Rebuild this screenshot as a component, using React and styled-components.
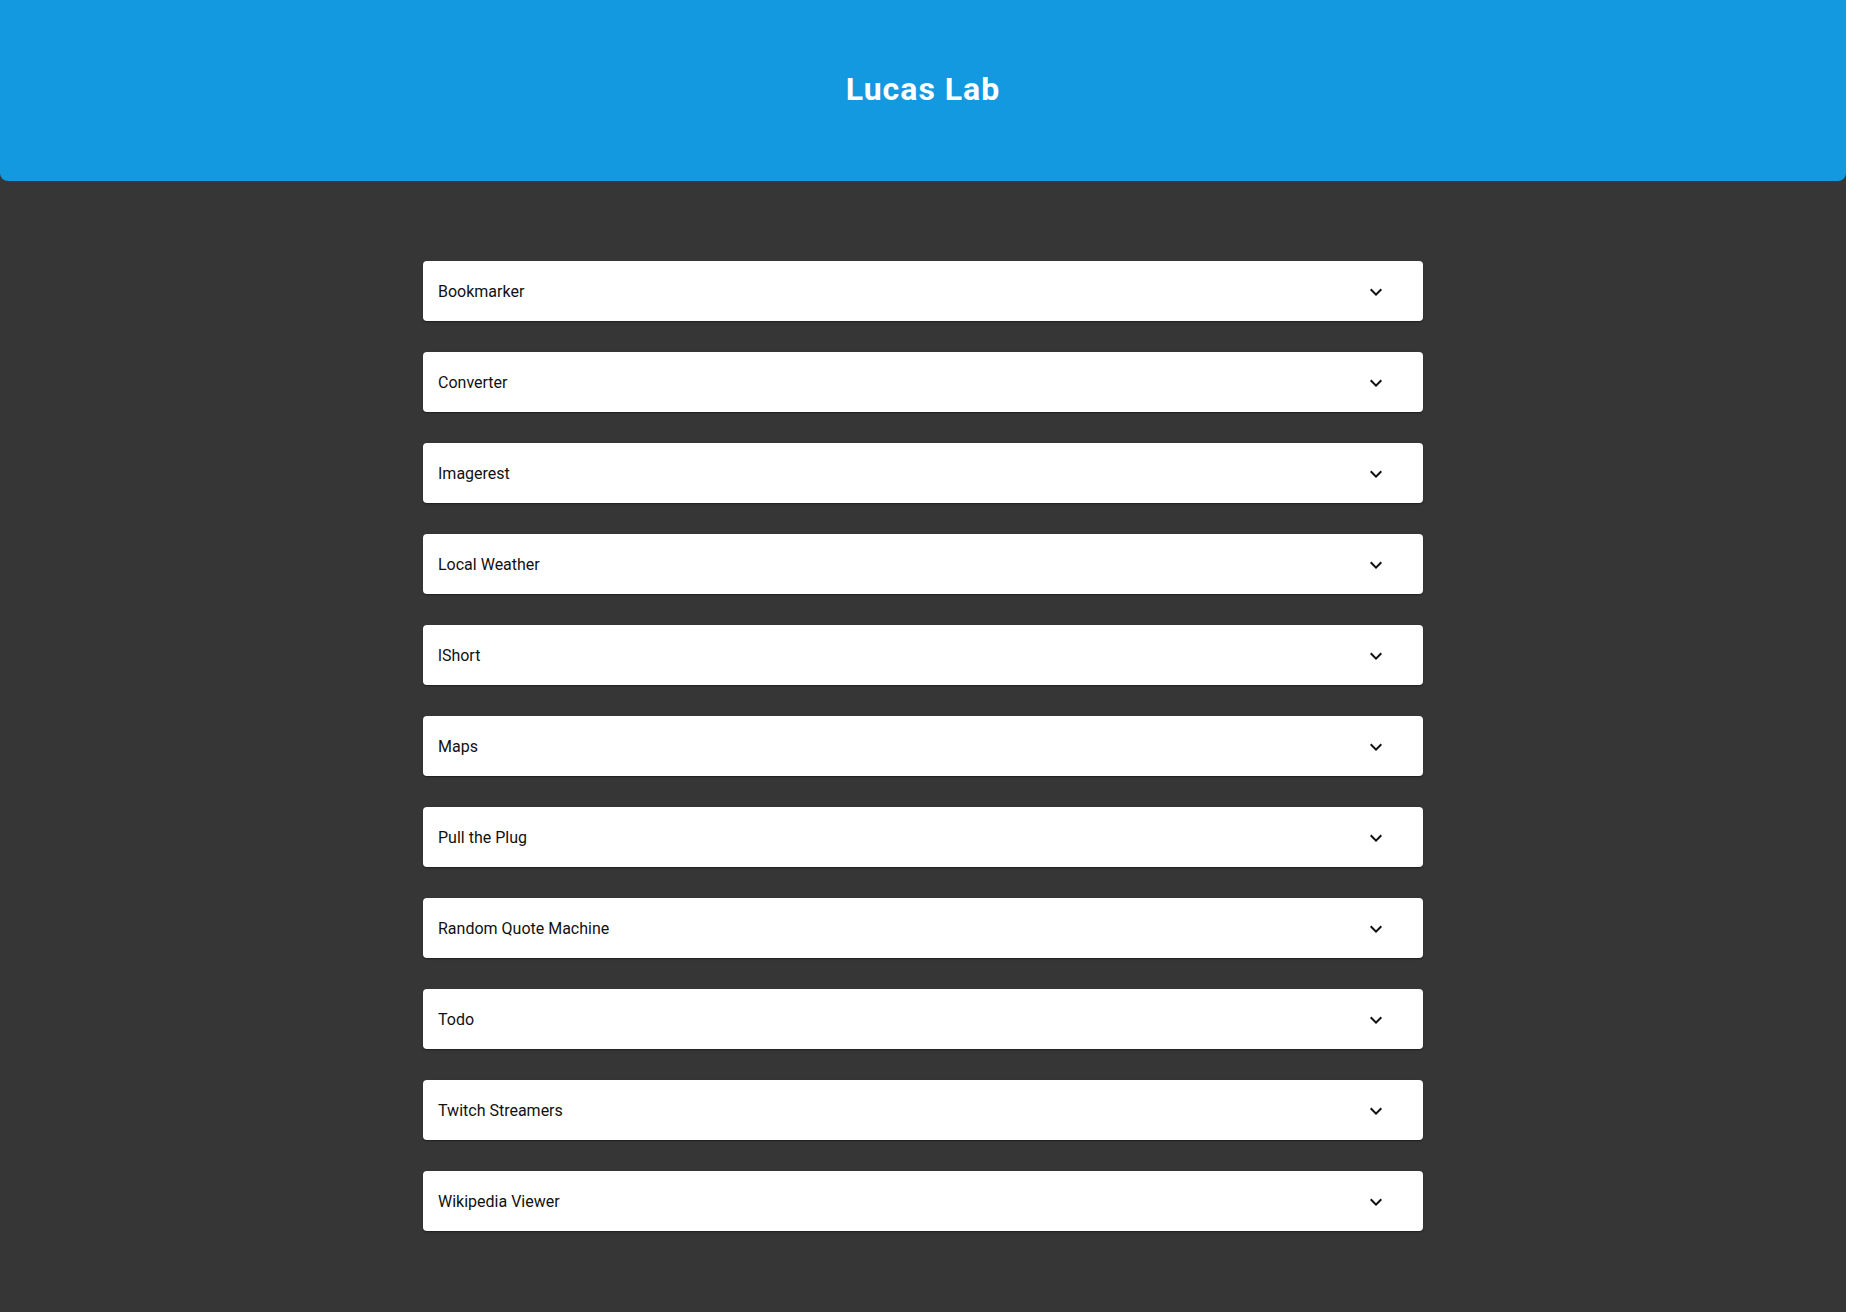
import React from "react";
import styled, { createGlobalStyle } from "styled-components";

const GlobalStyle = createGlobalStyle`
  html, body {
    margin: 0;
    padding: 0;
    background: #ffffff;
  }

  body {
    font-family: Roboto, "Liberation Sans", sans-serif;
  }
`;

const StyledPage = styled.div`
  width: calc(100% - 9px);
  min-height: 100vh;
  background-color: #363636;
  display: flex;
  flex-direction: column;
`;

const StyledHeader = styled.header`
  height: 181px;
  background-color: #1399e0;
  border-radius: 0 0 8px 8px;
  display: flex;
  align-items: center;
  justify-content: center;
  padding-bottom: 4px;
  box-sizing: border-box;
`;

const StyledTitle = styled.h1`
  margin: 0;
  color: #ffffff;
  font-family: Roboto, "Liberation Sans", sans-serif;
  font-weight: 700;
  font-size: 32px;
  letter-spacing: 1px;
`;

const StyledList = styled.main`
  width: 1000px;
  margin: 0 auto;
  padding: 80px 0 80px;
  display: flex;
  flex-direction: column;
  gap: 31px;
`;

const StyledItem = styled.div`
  height: 60px;
  background-color: #ffffff;
  border-radius: 4px;
  box-shadow: 0 2px 1px -1px rgba(0, 0, 0, 0.2), 0 1px 1px 0 rgba(0, 0, 0, 0.14),
    0 1px 3px 0 rgba(0, 0, 0, 0.12);
  display: flex;
  align-items: center;
  justify-content: space-between;
  padding: 0 35px 0 15px;
  box-sizing: border-box;
  cursor: pointer;
`;

const StyledLabel = styled.span`
  color: #111111;
  font-size: 16px;
  line-height: 1;
  padding-top: 1px;
`;

const StyledChevron = styled.svg`
  width: 24px;
  height: 24px;
  fill: #111111;
  margin-top: 1px;
`;

const projects = [
  "Bookmarker",
  "Converter",
  "Imagerest",
  "Local Weather",
  "lShort",
  "Maps",
  "Pull the Plug",
  "Random Quote Machine",
  "Todo",
  "Twitch Streamers",
  "Wikipedia Viewer",
];

const ExpandIcon = () => (
  <StyledChevron viewBox="0 0 24 24">
    <path d="M16.59 8.59 12 13.17 7.41 8.59 6 10l6 6 6-6z" />
  </StyledChevron>
);

const App = () => (
  <>
    <GlobalStyle />
    <StyledPage>
      <StyledHeader>
        <StyledTitle>Lucas Lab</StyledTitle>
      </StyledHeader>
      <StyledList>
        {projects.map((name) => (
          <StyledItem key={name}>
            <StyledLabel>{name}</StyledLabel>
            <ExpandIcon />
          </StyledItem>
        ))}
      </StyledList>
    </StyledPage>
  </>
);

export default App;
